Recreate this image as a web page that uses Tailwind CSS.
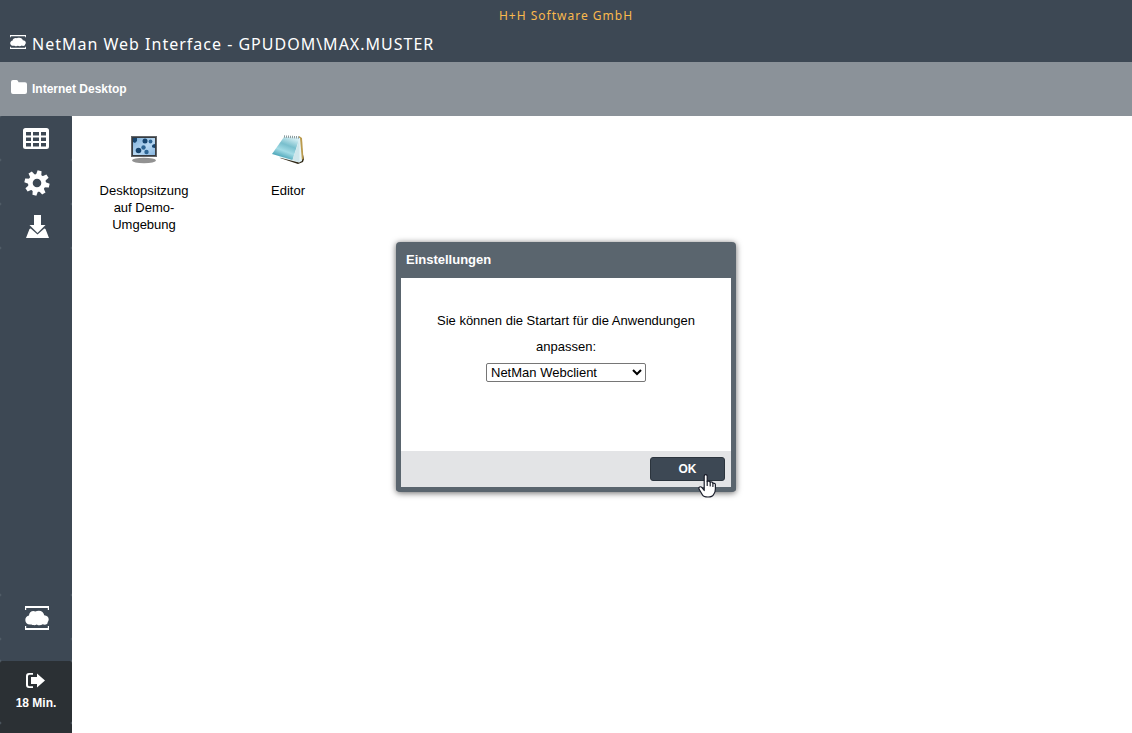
<!DOCTYPE html>
<html lang="de">
<head>
<meta charset="utf-8">
<meta name="viewport" content="width=device-width, initial-scale=1">
<title>NetMan Web Interface</title>
<script src="https://cdn.jsdelivr.net/npm/@tailwindcss/browser@4"></script>
</head>
<body class="relative flex h-screen flex-col overflow-hidden bg-white font-['Liberation_Sans',Arial,sans-serif] text-[13px] text-black">

<svg class="hidden" aria-hidden="true">
  <symbol id="cloud-logo" viewBox="0 0 24 24" preserveAspectRatio="none">
    <path d="M0 4V0h24v4h-1.200V2H1.200v2zM0 20v4h24v-4h-1.200v2H1.200v-2z"/>
    <path d="M5 18.500C2 18.500.3 16.500.3 14 .3 11.500 2 10 4 9.500c0-2.500 2-4.500 4.500-4.500.7 0 1.200.2 1.800.5C11.200 4.900 12.500 4.700 13.800 4.700c3 0 5 1.800 5.400 4.500C22 9.500 23.700 10.900 23.700 13.200c0 1.200-.4 2-1 2.800.2 1.700-1.200 2.700-3 2.700-.8 0-1.500-.2-2-.5-1 .7-2 1-3.200 1-1 0-2-.2-2.700-.8-1 .7-2.200.9-3.500.7-.7-.1-1.300-.3-1.800-.7z"/>
  </symbol>
</svg>

<header class="flex h-[62px] shrink-0 flex-col bg-[#3d4854] font-['Noto_Sans','Open_Sans',sans-serif] tracking-[1px]">
  <p class="pt-1.5 text-center text-xs leading-5 text-[#fab94d]">H+H Software GmbH</p>
  <h1 class="flex items-center gap-1.5 px-2.5 pt-1.5 text-base leading-6 text-white">
    <svg class="mb-1 h-[14px] w-4" fill="currentColor" aria-hidden="true"><use href="#cloud-logo" width="16" height="14"/></svg>
    NetMan Web Interface - GPUDOM\MAX.MUSTER
  </h1>
</header>

<nav class="flex h-[54px] shrink-0 items-center bg-[#8b9299] pr-2.5 pl-[11px]">
  <a href="#" class="flex items-center gap-[5px] text-xs font-bold text-white">
    <svg class="mb-1 h-[14px] w-4" viewBox="0 0 16 14" fill="currentColor" aria-hidden="true"><path d="M0 2Q0 0 2 0h3.500Q7 0 7.200 1.500L7.500 2.300H14Q16 2.300 16 4.300V12Q16 14 14 14H2Q0 14 0 12z"/></svg>
    Internet Desktop
  </a>
</nav>

<div class="flex min-h-0 flex-1">
  <aside class="flex w-[72px] shrink-0 flex-col bg-[#5a656f] text-white">
    <button type="button" aria-label="Anwendungen" class="flex h-11 items-center justify-center rounded-[2px] bg-[#3d4854]">
      <svg class="h-[21px] w-[26px]" viewBox="0 0 26 21" fill="currentColor" fill-rule="evenodd" aria-hidden="true"><path d="M2.500 0h21Q26 0 26 2.500v16q0 2.500-2.500 2.500h-21Q0 21 0 18.500v-16Q0 0 2.500 0zM3 4v3.500h5V4zM10 4v3.500h6V4zM18 4v3.500h5V4zM3 9.500V13h5V9.500zM10 9.500V13h6V9.500zM18 9.500V13h5V9.500zM3 15v3.500h5V15zM10 15v3.500h6V15zM18 15v3.500h5V15z"/></svg>
    </button>
    <button type="button" aria-label="Einstellungen" class="flex h-11 items-center justify-center rounded-[2px] bg-[#3d4854] pt-px pl-0.5">
      <svg class="size-[26px]" viewBox="-13 -13 26 26" fill="currentColor" aria-hidden="true">
        <g transform="rotate(12)">
          <path id="tooth" d="M-2.800-7L-2-12.500H2L2.800-7z"/>
          <use href="#tooth" transform="rotate(45)"/><use href="#tooth" transform="rotate(90)"/><use href="#tooth" transform="rotate(135)"/><use href="#tooth" transform="rotate(180)"/><use href="#tooth" transform="rotate(225)"/><use href="#tooth" transform="rotate(270)"/><use href="#tooth" transform="rotate(315)"/>
        </g>
        <circle r="6.700" fill="none" stroke="currentColor" stroke-width="4.800"/>
      </svg>
    </button>
    <button type="button" aria-label="Download" class="flex h-11 items-center justify-center rounded-[2px] bg-[#3d4854] pt-px pl-0.5">
      <svg class="h-[23px] w-[23px]" viewBox="0 0 23 23" fill="currentColor" aria-hidden="true"><path d="M8 0h7v10h4.500l-8 8-8-8H8z"/><path d="M3.500 14l1.200-.5 6.800 6 6.800-6 1.200.5L23 23H0z"/></svg>
    </button>
    <div class="flex-1 rounded-[2px] bg-[#3d4854]"></div>
    <button type="button" aria-label="NetMan" class="flex h-11 items-center justify-center rounded-[2px] bg-[#3d4854] pt-px pl-0.5">
      <svg class="size-6" fill="currentColor" aria-hidden="true"><use href="#cloud-logo" width="24" height="24"/></svg>
    </button>
    <div class="h-[22px] rounded-[2px] bg-[#3d4854]"></div>
    <button type="button" class="flex h-[62px] flex-col items-center gap-[7px] rounded-[2px] bg-[#2b3034] pt-3 text-xs leading-4 font-bold">
      <svg class="mr-0.5 h-[15px] w-[19px]" viewBox="0 0 19 15" fill="currentColor" aria-hidden="true"><path d="M7 0v1.800H3.500q-1.500 0-1.500 1.500v8.400q0 1.500 1.500 1.500H7V15H3Q0 15 0 12V3Q0 0 3 0z"/><path d="M5 4h6V.5l8 7-8 7V11H5z"/></svg>
      18 Min.
    </button>
    <div class="h-2.5 rounded-t-[2px] bg-[#2b3034]"></div>
  </aside>

  <main class="flex flex-1 items-start leading-[17px]">
    <a href="#" class="flex w-36 flex-col items-center gap-4 px-6 pt-[18px] text-center">
      <svg class="size-8" viewBox="0 0 32 32" aria-hidden="true">
        <defs><linearGradient id="screen" x2="1" y2="1"><stop stop-color="#79acd8"/><stop offset=".55" stop-color="#b9d9f3"/><stop offset="1" stop-color="#86b5df"/></linearGradient></defs>
        <ellipse cx="16" cy="26.500" rx="12" ry="2.700" fill="#929292"/>
        <rect x="3" y="2" width="26" height="21" rx="1" fill="#393c40"/>
        <rect x="3.500" y="2.500" width="25" height="20" fill="none" stroke="#63676b"/>
        <rect x="5" y="4" width="22" height="17" fill="url(#screen)"/>
        <g fill="#17456f"><path d="M5 4h4v3l-2 2-2-1z"/><circle cx="17" cy="7" r="2.500"/><circle cx="10.500" cy="16.500" r="2.800"/><path d="M27 10v4q-3.500 0-3-2.200.5-1.800 3-1.800z"/></g>
        <g fill="#2e6594"><circle cx="15.500" cy="13.500" r="2.200"/><circle cx="18.500" cy="18" r="2.200"/><circle cx="22.500" cy="7.500" r="1.900"/></g>
      </svg>
      <span>Desktopsitzung auf Demo-Umgebung</span>
    </a>
    <a href="#" class="flex w-36 flex-col items-center gap-4 px-6 pt-[18px] text-center">
      <svg class="size-8" viewBox="0 0 32 32" aria-hidden="true">
        <defs><linearGradient id="cover" x1=".7" x2=".25" y2="1"><stop stop-color="#d5eff4"/><stop offset=".35" stop-color="#79bfcd"/><stop offset=".6" stop-color="#a4dce6"/><stop offset="1" stop-color="#238ca3"/></linearGradient></defs>
        <path d="M8 24l18 6 5-2 1-3L28 8z" fill="#302817"/>
        <path d="M27 2l3 2 1.500 21-4 2z" fill="#bb9b4e"/>
        <path d="M12 3l16 1 2 23-3 1.500-20-5z" fill="#e9f6f8"/>
        <path d="M12 3l15.500 1-7 22L0 20z" fill="url(#cover)"/>
        <path d="M27.500 5l-7 21 7 2.500z" fill="#cfe6eb"/>
        <path d="M12 2.500l16 1" stroke="#8a9c9f" stroke-width="2.500" stroke-dasharray="1 1"/>
      </svg>
      <span>Editor</span>
    </a>
  </main>
</div>

<div class="absolute inset-0 flex items-center justify-center">
  <section role="dialog" aria-labelledby="dialog-title" class="relative flex w-[340px] flex-col rounded border-[5px] border-t-0 border-[#5a656e] bg-white shadow-[0_1px_6px_rgba(0,0,0,0.6)]">
    <h2 id="dialog-title" class="flex h-9 items-center bg-[#5a656e] px-[5px] text-[13px] font-bold text-white">Einstellungen</h2>
    <div class="flex h-[173px] flex-col items-center px-6 pt-[30px] text-center leading-[26px]">
      <label for="startart">Sie können die Startart für die Anwendungen anpassen:</label>
      <select id="startart" class="mt-[3px] h-[19px] w-40 rounded-[2px] border border-[#767676] bg-white text-[13px] leading-4">
        <option>NetMan Webclient</option>
      </select>
    </div>
    <footer class="flex h-9 items-center justify-end bg-[#e3e4e6] px-1.5">
      <button type="button" class="h-6 w-[75px] rounded-[3px] border border-[#2b343d] bg-[#3d4854] text-xs leading-5 font-bold text-white">OK</button>
    </footer>
    <svg class="pointer-events-none absolute right-[14px] -bottom-[11px] h-6 w-[19px]" viewBox="0 0 19 24" aria-hidden="true">
      <path d="M6.200 16.500V2.300q0-1.600 1.500-1.600t1.500 1.600v5q2.500-.7 3 .8 2.200-.5 2.700 1 2.500-.1 2.500 1.700V15q0 3-1.800 5.500-1.200 2.500-5.600 2.500-4.400 0-5.500-2L1.300 15.500q-1-1.800.2-2.500 1.300-.8 2.700.9z" fill="#fff" stroke="#1b1e2b" stroke-width="1.200" stroke-linejoin="round"/>
      <path d="M9.200 7v4.500M12.200 8v4M14.900 9v3.500" stroke="#1b1e2b" stroke-width="1.200" stroke-linecap="round"/>
    </svg>
  </section>
</div>
</body>
</html>
